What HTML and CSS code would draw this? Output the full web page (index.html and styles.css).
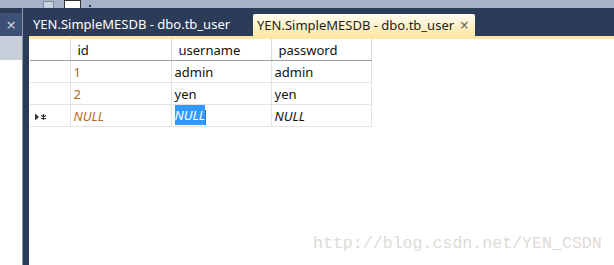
FILE: index.html
```html
<!DOCTYPE html>
<html lang="zh">
<head>
  <meta charset="UTF-8">
  <title>tb_user</title>
  <link rel="stylesheet" href="styles.css">
</head>
<body>
<!-- 顶部工具条 -->
<div class="toolbar">
  <span class="tool-btn"></span>
  <span class="tool-box"></span>
  <span class="tool-arrow"></span>
</div>

<div class="main">
  <!-- 左侧面板 -->
  <div class="side">
    <div class="side-tabs">
      <div class="side-tab">&times;</div>
    </div>
    <div class="side-head"></div>
    <div class="side-body"></div>
  </div>
  <div class="splitter"></div>

  <!-- 文档区 -->
  <div class="doc">
    <div class="tabs">
      <div class="tab">YEN.SimpleMESDB - dbo.tb_user</div>
      <div class="tab active">YEN.SimpleMESDB - dbo.tb_user <span class="tab-close">&times;</span></div>
    </div>
    <div class="tabline"></div>

    <table class="grid">
      <colgroup>
        <col class="c-sel">
        <col class="c-id">
        <col class="c-name">
        <col class="c-pass">
      </colgroup>
      <thead>
        <tr>
          <th class="sel"></th>
          <th>id</th>
          <th>username</th>
          <th>password</th>
        </tr>
      </thead>
      <tbody>
        <tr>
          <td class="sel"></td>
          <td class="num">1</td>
          <td>admin</td>
          <td>admin</td>
        </tr>
        <tr>
          <td class="sel"></td>
          <td class="num">2</td>
          <td>yen</td>
          <td>yen</td>
        </tr>
        <tr>
          <td class="sel">
            <svg width="12" height="8" viewBox="0 0 12 8">
              <path d="M0 0.5 L4 4 L0 7.5 Z" fill="#333"/>
              <path d="M8.5 1 V7 M6 2.5 L11 5.5 M11 2.5 L6 5.5" stroke="#333" stroke-width="1.3"/>
            </svg>
          </td>
          <td class="num null">NULL</td>
          <td class="null"><span class="picked">NULL</span><span class="caret"></span></td>
          <td class="null">NULL</td>
        </tr>
      </tbody>
    </table>
  </div>
</div>

<div class="watermark">http://blog.csdn.net/YEN_CSDN</div>
</body>
</html>
```

FILE: styles.css
```css
body {
  margin: 0;
  width: 614px;
  height: 265px;
  overflow: hidden;
  background-color: #fff;
  font-family: "Noto Sans", "Noto Sans CJK SC", sans-serif;
  font-size: 13px;
  position: relative;
}

/* 顶部工具条 */
.toolbar {
  height: 8px;
  background-color: #a6b2c7;
  display: flex;
  align-items: flex-end;
  padding-left: 43px;
  gap: 10px;
}

.tool-btn {
  width: 9px;
  height: 6px;
  background-color: #c9d1de;
  border: 1px solid #7d8aa1;
  border-bottom: none;
}

.tool-box {
  width: 15px;
  height: 7px;
  background-color: #fff;
  border: 1px solid #333;
  border-bottom: none;
}

.tool-arrow {
  width: 2px;
  height: 2px;
  background-color: #333;
  margin-bottom: 1px;
  margin-left: -2px;
}

.main {
  display: flex;
  height: 257px;
}

/* 左侧面板 */
.side {
  width: 22px;
  display: flex;
  flex-direction: column;
}

.side-tabs {
  height: 28px;
  background-color: #2b3b58;
  display: flex;
  align-items: flex-end;
}

.side-tab {
  width: 22px;
  height: 23px;
  background-color: #3c5073;
  color: #c7cfdc;
  font-size: 17px;
  line-height: 23px;
  text-align: center;
}

.side-head {
  height: 24px;
  background-color: #c8cfdb;
}

.side-body {
  flex: 1;
  background-color: #fff;
}

.splitter {
  width: 6px;
  border-left: 1px solid #8c95a5;
  background-color: #2b3b58;
}

/* 文档区 */
.doc {
  flex: 1;
  display: flex;
  flex-direction: column;
}

.tabs {
  height: 28px;
  background-color: #2b3b58;
  display: flex;
  align-items: flex-end;
  padding-left: 4px;
}

.tab {
  height: 22px;
  line-height: 21px;
  color: #fff;
  width: 220px;
}

.tab.active {
  width: 218px;
  height: 22px;
  padding-left: 4px;
  color: #1e1e1e;
  border-radius: 2px 2px 0 0;
  background: linear-gradient(#fffcf2, #fff0c4 60%, #ffe8a6);
  display: flex;
  align-items: center;
}

.tab-close {
  margin-left: auto;
  margin-right: 6px;
  color: #6d6a5f;
  font-size: 16px;
}

.tabline {
  height: 3px;
  background-color: #ffe8a6;
}

/* 数据表格 */
.grid {
  align-self: flex-start;
  border-collapse: collapse;
  margin-left: 1px;
  table-layout: fixed;
  width: 341px;
}

.c-sel { width: 40px; }
.c-id { width: 101px; }
.c-name { width: 100px; }
.c-pass { width: 100px; }

.grid th,
.grid td {
  height: 21px;
  padding: 0 0 0 3px;
  border: 1px solid #e4e4e4;
  text-align: left;
  font-weight: normal;
  color: #111;
  white-space: nowrap;
  overflow: hidden;
}

.grid th {
  padding-left: 7px;
  border-top: none;
  border-bottom: 1px solid #a0a0a0;
  border-right-color: #d8d8d8;
}

.grid .sel {
  border-left: none;
  padding-left: 5px;
}

.grid .num {
  color: #b26b26;
}

.grid .null {
  font-style: italic;
}

.picked {
  background-color: #3399ff;
  color: #fff;
  padding: 1px 0;
}

.caret {
  display: inline-block;
  width: 1px;
  height: 15px;
  background-color: #b25e1a;
  vertical-align: middle;
}

/* 水印 */
.watermark {
  position: absolute;
  left: 313px;
  top: 234px;
  font-family: "Liberation Mono", monospace;
  font-size: 16.6px;
  color: #dedbd5;
}
```
